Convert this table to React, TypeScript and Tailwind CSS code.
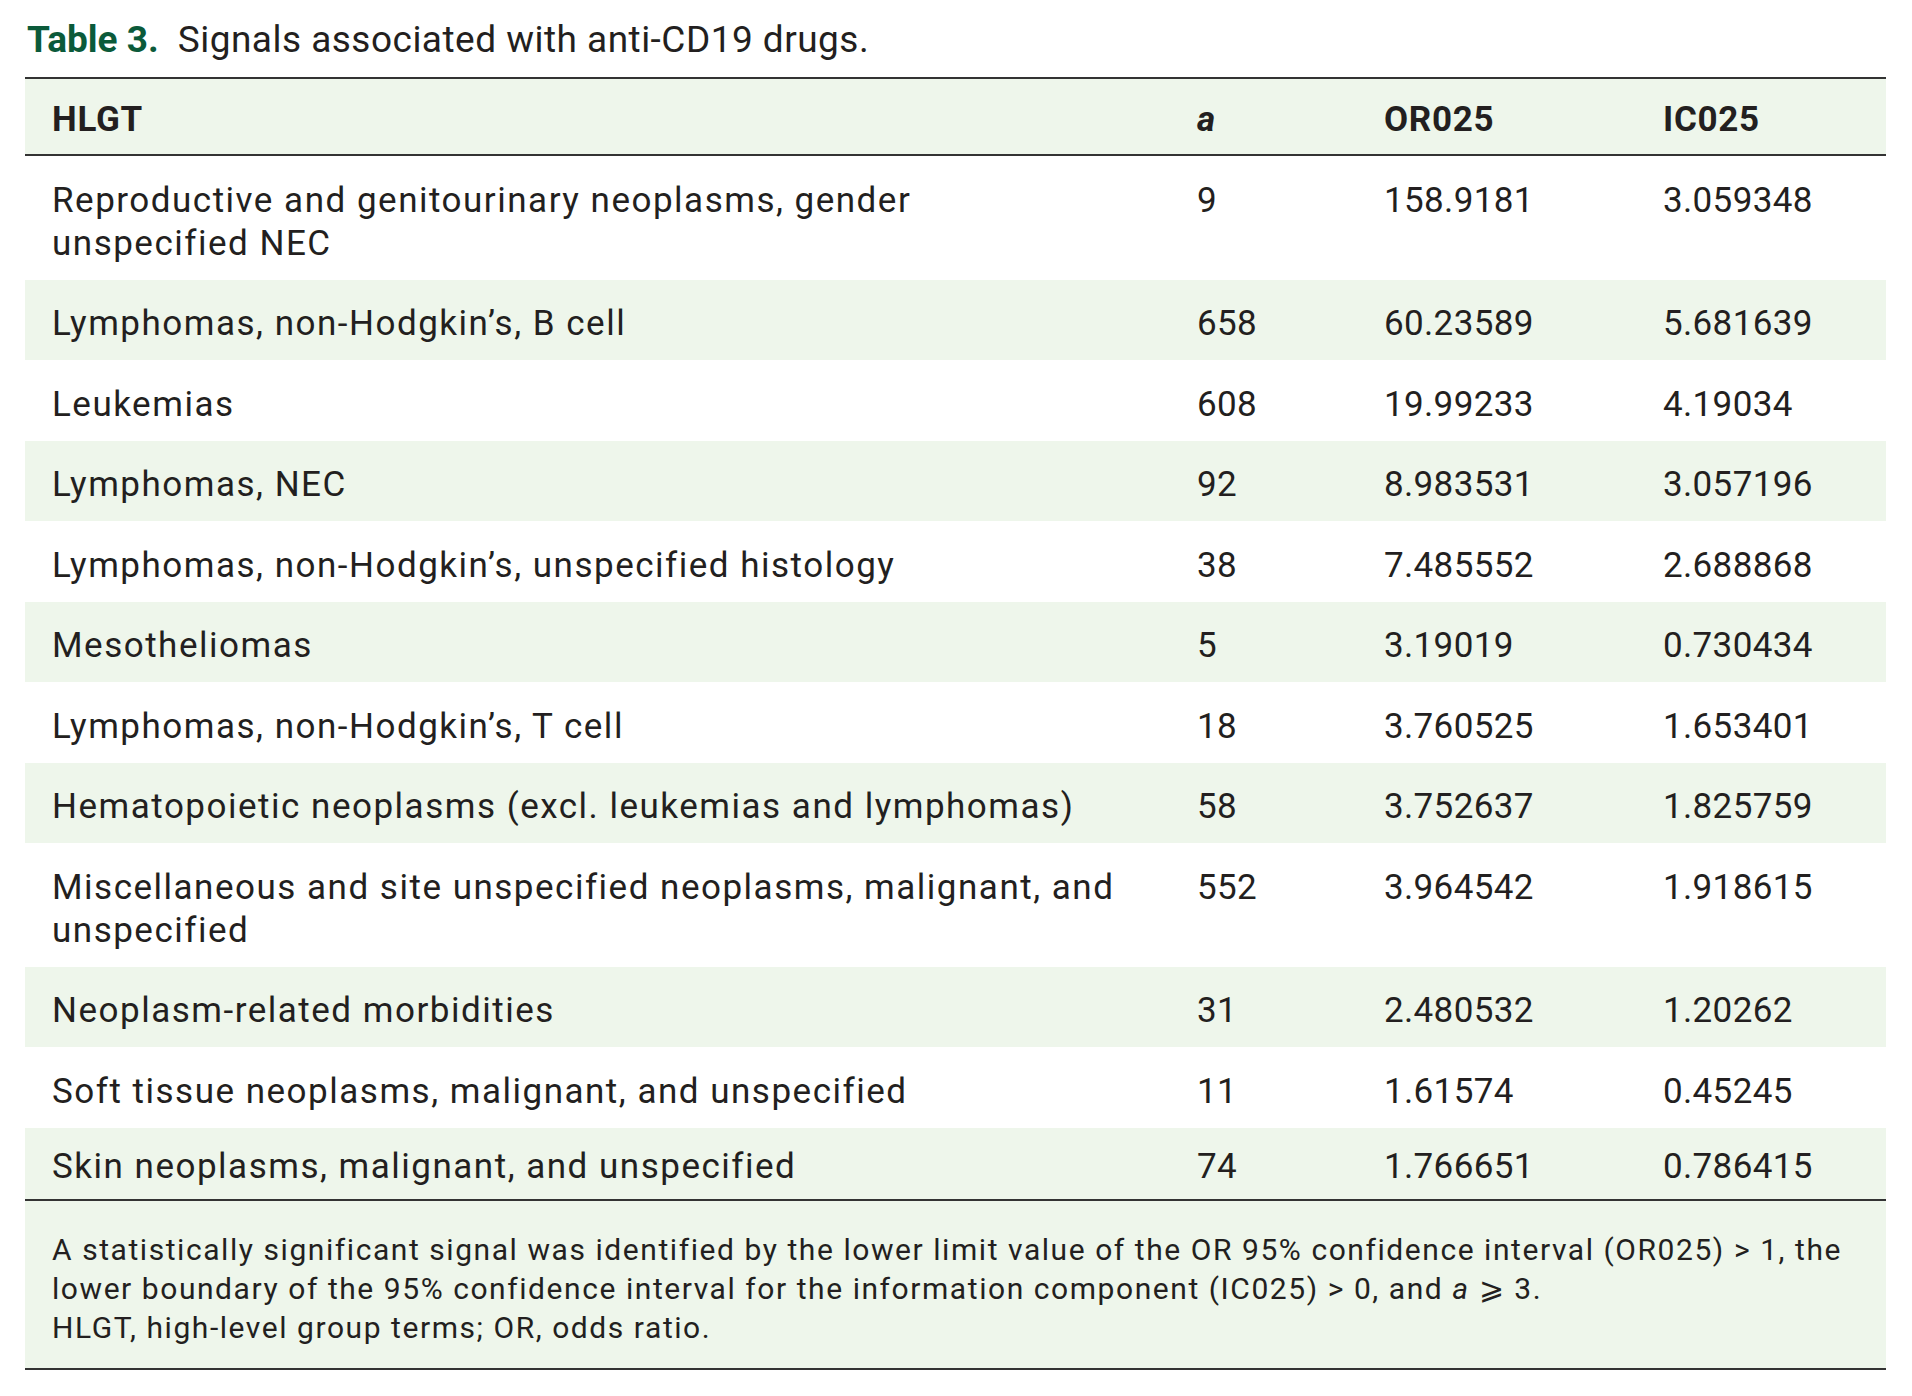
const rows = [
  { name: ["Reproductive and genitourinary neoplasms, gender", "unspecified NEC"], a: "9", or: "158.9181", ic: "3.059348" },
  { name: ["Lymphomas, non-Hodgkin’s, B cell"], a: "658", or: "60.23589", ic: "5.681639" },
  { name: ["Leukemias"], a: "608", or: "19.99233", ic: "4.19034" },
  { name: ["Lymphomas, NEC"], a: "92", or: "8.983531", ic: "3.057196" },
  { name: ["Lymphomas, non-Hodgkin’s, unspecified histology"], a: "38", or: "7.485552", ic: "2.688868" },
  { name: ["Mesotheliomas"], a: "5", or: "3.19019", ic: "0.730434" },
  { name: ["Lymphomas, non-Hodgkin’s, T cell"], a: "18", or: "3.760525", ic: "1.653401" },
  { name: ["Hematopoietic neoplasms (excl. leukemias and lymphomas)"], a: "58", or: "3.752637", ic: "1.825759" },
  { name: ["Miscellaneous and site unspecified neoplasms, malignant, and", "unspecified"], a: "552", or: "3.964542", ic: "1.918615" },
  { name: ["Neoplasm-related morbidities"], a: "31", or: "2.480532", ic: "1.20262" },
  { name: ["Soft tissue neoplasms, malignant, and unspecified"], a: "11", or: "1.61574", ic: "0.45245" },
  { name: ["Skin neoplasms, malignant, and unspecified"], a: "74", or: "1.766651", ic: "0.786415" },
];

export default function App() {
  return (
    <div className="min-h-screen bg-white pl-[25px] pr-[26px] pt-[18px] font-['Roboto',sans-serif] text-[#231f20]">
      <h1 className="mb-[15px] pl-[2px] text-[37px] leading-[44px]">
        <span className="font-bold text-[#0b5a3a]">Table 3.</span>
        <span className="ml-[19px] tracking-[0.013em]">Signals associated with anti-CD19 drugs.</span>
      </h1>

      <table className="w-full table-fixed border-collapse text-[35px] leading-[43px]">
        <colgroup>
          <col className="w-[1145px]" />
          <col className="w-[187px]" />
          <col className="w-[279px]" />
          <col />
        </colgroup>
        <thead>
          <tr className="border-y-2 border-[#333333] bg-[#eef6eb] text-left tracking-[0.02em]">
            <th className="pt-[18.5px] pb-[13.5px] pl-[27px] font-bold">HLGT</th>
            <th className="pt-[18.5px] pb-[13.5px] pl-[27px] font-bold italic">a</th>
            <th className="pt-[18.5px] pb-[13.5px] pl-[27px] font-bold">OR025</th>
            <th className="pt-[18.5px] pb-[13.5px] pl-[27px] font-bold">IC025</th>
          </tr>
        </thead>
        <tbody>
          {rows.map((row, i) => {
            const last = i === rows.length - 1;
            const pad = last ? "pt-[17px] pb-[11px]" : "pt-[22.5px] pb-[15px]";
            return (
              <tr key={row.name[0]} className={i % 2 === 1 ? "bg-[#eef6eb]" : "bg-white"}>
                <td className={`${pad} whitespace-nowrap pl-[27px] align-top tracking-[0.043em]`}>
                  {row.name.map((line, j) => (
                    <div key={j}>{line}</div>
                  ))}
                </td>
                <td className={`${pad} pl-[27px] align-top tracking-[0.01em]`}>{row.a}</td>
                <td className={`${pad} pl-[27px] align-top tracking-[0.01em]`}>{row.or}</td>
                <td className={`${pad} pl-[27px] align-top tracking-[0.01em]`}>{row.ic}</td>
              </tr>
            );
          })}
        </tbody>
      </table>

      <div className="border-y-2 border-[#333333] bg-[#eef6eb] px-[27px] pb-[21px] pt-[29px] text-[30px] leading-[39px] tracking-[0.052em]">
        <p>
          A statistically significant signal was identified by the lower limit value of the OR 95% confidence interval
          (OR025) &gt; 1, the lower boundary of the 95% confidence interval for the information component (IC025) &gt; 0,
          and <i>a</i> ⩾ 3.
        </p>
        <p>HLGT, high-level group terms; OR, odds ratio.</p>
      </div>
    </div>
  );
}
